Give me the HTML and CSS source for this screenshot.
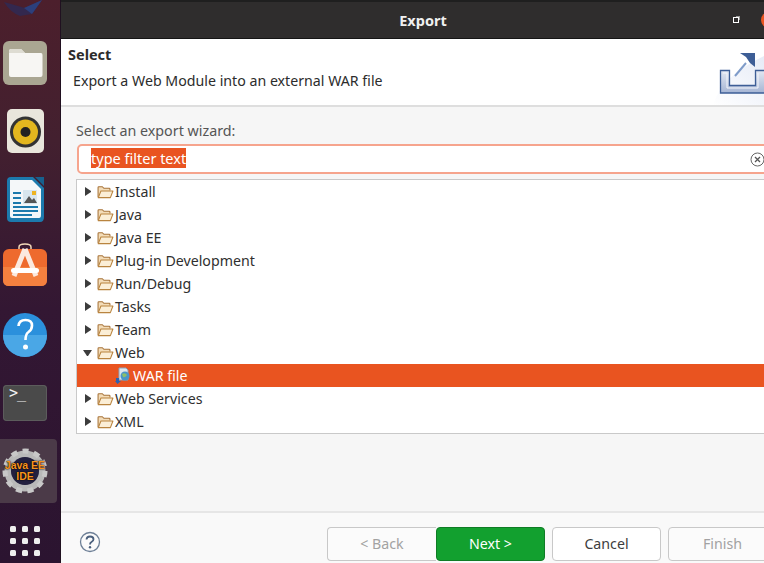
FILE: index.html
```html
<!DOCTYPE html>
<html lang="en">
<head>
<meta charset="utf-8">
<title>Export</title>
<link rel="stylesheet" href="styles.css">
</head>
<body>
<svg class="defs" width="0" height="0" aria-hidden="true">
  <defs>
    <symbol id="folder" viewBox="0 0 16 13">
      <path d="M1 11.500V2.200Q1 1.500 1.700 1.500H5L6.500 3H11.500Q12.200 3 12.200 3.700V5" fill="#f3dcb8" stroke="#a8743a" stroke-width="1"/>
      <path d="M1.200 11.800L3.700 5.500H15L12.600 11.800Z" fill="#fbeed6" stroke="#b9843f" stroke-width="1" stroke-linejoin="round"/>
    </symbol>
  </defs>
</svg>
<div class="screen">
  <nav class="dock">
    <svg class="dock-top" width="50" height="16" viewBox="0 0 50 16"><path d="M4 2L25 8L42 0L32 14L20 16Q10 12 4 2Z" fill="#33284e"/><path d="M32 14L42 0L24 8Z" fill="#2c3f7c"/></svg>
    <div class="dock-item item-files">
      <svg width="44" height="44" viewBox="0 0 44 44"><rect x="0" y="0" width="44" height="44" rx="6" fill="#aaa692"/><path d="M6 10Q6 8 8 8H18L22 12H38Q39.500 12 39.500 14V34Q39.500 36 37.500 36H8Q6 36 6 34Z" fill="#f7f6f3"/><path d="M6 12Q6 8 8 8H18L22 12Z" fill="#dedcd2"/></svg>
    </div>
    <div class="dock-item item-sound">
      <svg width="37" height="44" viewBox="0 0 37 44"><rect width="37" height="44" rx="5" fill="#e9e6dc"/><circle cx="18.500" cy="23" r="15.500" fill="#333"/><circle cx="18.500" cy="23" r="12.500" fill="#e3b71f"/><circle cx="18.500" cy="23" r="5" fill="#222"/></svg>
    </div>
    <div class="dock-item item-writer">
      <svg width="37" height="45" viewBox="0 0 37 45"><path d="M4 0H26L37 11V40Q37 45 33 45H4Q0 45 0 41V4Q0 0 4 0Z" fill="#1c7aad"/><path d="M3 3H25L34 12V38Q34 41 32 41H5Q3 41 3 39Z" fill="#f4f7f9"/><path d="M28 0L37 0V9Z" fill="#17618e"/><rect x="6" y="15" width="8" height="2" fill="#1c7aad"/><rect x="6" y="20" width="8" height="2" fill="#1c7aad"/><rect x="6" y="25" width="8" height="2" fill="#1c7aad"/><rect x="16" y="13" width="14" height="14" fill="#d8e6ee"/><path d="M17 26L22 19L25 23L27 21L30 26Z" fill="#555"/><rect x="25" y="14" width="4" height="4" fill="#eeb422"/><rect x="6" y="29" width="25" height="2" fill="#1c7aad"/><rect x="6" y="33" width="25" height="2" fill="#1c7aad"/><rect x="6" y="37" width="19" height="2" fill="#1c7aad"/></svg>
    </div>
    <div class="dock-item item-store">
      <svg width="44" height="43" viewBox="0 0 44 43"><path d="M16 8V4Q16 1 22 1Q28 1 28 4V8" fill="none" stroke="#f1d8b8" stroke-width="1.500"/><rect x="0" y="6" width="44" height="37" rx="6" fill="#ee6a2e"/><path d="M0 24H44V37Q44 43 38 43H6Q0 43 0 37Z" fill="#f4803f"/><path d="M22 6L11 33M22 6L33 33" stroke="#fbe9df" stroke-width="5" fill="none"/><rect x="8" y="25" width="28" height="5" rx="2.500" fill="#fff"/></svg>
    </div>
    <div class="dock-item item-help">
      <svg width="44" height="44" viewBox="0 0 44 44"><circle cx="22" cy="22" r="22" fill="#2b90dc"/><path d="M0 22A22 22 0 0 0 44 22Z" fill="#4aa7e6"/><path d="M15.500 13Q16 7 22.500 7Q29 7 29 12.500Q29 16.500 25.500 19Q22.500 21 22.500 27" fill="none" stroke="#fff" stroke-width="2.600"/><circle cx="22.500" cy="34" r="2.500" fill="#fff"/></svg>
    </div>
    <div class="dock-item item-term">
      <div class="term"><span class="term-prompt">&gt;_</span></div>
    </div>
    <div class="dock-active">
      <div class="gear">
        <svg width="46" height="46" viewBox="0 0 46 46"><circle cx="23" cy="23" r="17" fill="none" stroke="#b9b9b9" stroke-width="7"/><circle cx="23" cy="23" r="20" fill="none" stroke="#c8c8c8" stroke-width="5" stroke-dasharray="6 5.400"/><circle cx="23" cy="23" r="14" fill="#23203f"/></svg>
        <span class="gear-label">Java EE<br>IDE</span>
      </div>
    </div>
    <div class="apps">
      <i></i><i></i><i></i><i></i><i></i><i></i><i></i><i></i><i></i>
    </div>
  </nav>

  <main class="window">
    <header class="titlebar">
      <span class="title">Export</span>
      <span class="restore"></span>
      <span class="close"></span>
    </header>
    <section class="banner">
      <div class="banner-text">
        <h1>Select</h1>
        <p>Export a Web Module into an external WAR file</p>
      </div>
      <svg class="banner-icon" width="72" height="59" viewBox="0 0 72 59">
        <defs>
          <linearGradient id="bg" x1="0" y1="1" x2="1" y2="0"><stop offset="0" stop-color="#fff"/><stop offset="1" stop-color="#dfe6f4"/></linearGradient>
          <linearGradient id="tray" x1="0" y1="0" x2="0" y2="1"><stop offset="0" stop-color="#e3e8f2"/><stop offset="1" stop-color="#a5b5d4"/></linearGradient>
        </defs>
        <path d="M0 60Q8 25 72 1V60Z" fill="url(#bg)"/>
        <path d="M7.500 24.500H16.500V39.500H42.500V24.500H72V47H7.500Z" fill="url(#tray)" stroke="#3d5e96" stroke-width="1.300"/>
        <path d="M10 27H14V42H45V27" fill="none" stroke="#f4f6fb" stroke-width="1"/>
        <path d="M22 30L33 17" stroke="#7f9cc9" stroke-width="2"/>
        <path d="M27 7H42V21L37 17L33 11Z" fill="#3d5e96"/>
      </svg>
    </section>
    <section class="body">
      <label class="filter-label">Select an export wizard:</label>
      <div class="filter">
        <span class="filter-text">type filter text</span>
        <svg class="clear" width="15" height="15" viewBox="0 0 15 15"><circle cx="7.500" cy="7.500" r="6.500" fill="none" stroke="#666" stroke-width="1"/><path d="M5 5L10 10M10 5L5 10" stroke="#555" stroke-width="1.300"/></svg>
      </div>
      <ul class="tree">
        <li class="row"><span class="tw closed"></span><svg class="fo"><use href="#folder"/></svg><span class="rt">Install</span></li>
        <li class="row"><span class="tw closed"></span><svg class="fo"><use href="#folder"/></svg><span class="rt">Java</span></li>
        <li class="row"><span class="tw closed"></span><svg class="fo"><use href="#folder"/></svg><span class="rt">Java EE</span></li>
        <li class="row"><span class="tw closed"></span><svg class="fo"><use href="#folder"/></svg><span class="rt">Plug-in Development</span></li>
        <li class="row"><span class="tw closed"></span><svg class="fo"><use href="#folder"/></svg><span class="rt">Run/Debug</span></li>
        <li class="row"><span class="tw closed"></span><svg class="fo"><use href="#folder"/></svg><span class="rt">Tasks</span></li>
        <li class="row"><span class="tw closed"></span><svg class="fo"><use href="#folder"/></svg><span class="rt">Team</span></li>
        <li class="row"><span class="tw open"></span><svg class="fo"><use href="#folder"/></svg><span class="rt">Web</span></li>
        <li class="row selected">
          <svg class="war" width="17" height="17" viewBox="0 0 17 17"><path d="M4 1H11L13 3V13H4Z" fill="#dfe6ee" stroke="#8aa0b8" stroke-width="1"/><circle cx="10" cy="9" r="4.500" fill="#4b95c9"/><path d="M7 7Q10 5 12 8Q10 11 8 10Z" fill="#8cc06a"/><path d="M1 11H4V14H6L2.500 17L0 14H1Z" fill="#2c62b0"/></svg>
          <span class="rt">WAR file</span>
        </li>
        <li class="row"><span class="tw closed"></span><svg class="fo"><use href="#folder"/></svg><span class="rt">Web Services</span></li>
        <li class="row"><span class="tw closed"></span><svg class="fo"><use href="#folder"/></svg><span class="rt">XML</span></li>
      </ul>
    </section>
    <footer class="footer">
      <svg class="help" width="22" height="22" viewBox="0 0 22 22"><circle cx="11" cy="11" r="9.500" fill="#fbfbfb" stroke="#6d7f96" stroke-width="1.300"/><path d="M7.500 8.500Q7.700 5.500 11 5.500Q14.500 5.500 14.500 8.300Q14.500 10 12.500 11Q11 11.800 11 13.500" fill="none" stroke="#4a5f7c" stroke-width="1.800"/><circle cx="11" cy="16.300" r="1.200" fill="#4a5f7c"/></svg>
      <div class="buttons">
        <div class="pair">
          <button class="btn disabled">&lt; Back</button>
          <button class="btn primary">Next &gt;</button>
        </div>
        <button class="btn">Cancel</button>
        <button class="btn disabled">Finish</button>
      </div>
    </footer>
  </main>
</div>
</body>
</html>
```

FILE: styles.css
```css
* { box-sizing: border-box; }
html, body { margin: 0; padding: 0; height: 100%; overflow: hidden; }
body { font-family: "Noto Sans", "Open Sans", sans-serif; font-size: 14.200px; color: #3d3d3d; background: #f6f6f6; }
.defs { position: absolute; }
.screen { display: flex; width: 764px; height: 563px; overflow: hidden; }

.dock { flex: none; width: 61px; height: 563px; display: flex; flex-direction: column; align-items: flex-start; background: linear-gradient(180deg, #4c1f2c 0%, #43202f 25%, #331733 55%, #2b1430 100%); border-right: 1px solid #201020; overflow: hidden; }
.dock-top { flex: none; }
.dock-item { flex: none; display: flex; justify-content: center; width: 50px; }
.item-files { margin-top: 25px; }
.item-sound { margin-top: 24px; }
.item-writer { margin-top: 24px; }
.item-store { margin-top: 21px; }
.item-help { margin-top: 27px; }
.item-term { margin-top: 28px; }
.term { width: 44px; height: 36px; border-radius: 4px; background: #4a4a4a; box-shadow: inset 0 0 0 1px #5c5c5c; padding: 0 0 0 6px; }
.term-prompt { display: block; color: #f2f2f2; font: 15px/17px "DejaVu Sans Mono", monospace; letter-spacing: -1px; }
.dock-active { flex: none; width: 57px; height: 64px; margin-top: 18px; padding-left: 2px; background: #4b3a48; border-radius: 0 4px 4px 0; display: flex; align-items: center; }
.gear { position: relative; width: 46px; height: 46px; }
.gear svg { display: block; }
.gear-label { position: absolute; inset: 0; display: flex; flex-direction: column; align-items: center; justify-content: center; text-align: center; color: #f7941e; font: 700 10.500px/11px "Liberation Sans", sans-serif; text-shadow: 0 0 2px #000, 0 0 1px #000; white-space: nowrap; }
.apps { flex: none; display: grid; grid-template-columns: repeat(3, 6px); grid-auto-rows: 6px; gap: 6px; margin: 23px 0 0 10px; }
.apps i { background: #eee; border-radius: 1.500px; }

.window { flex: none; width: 724px; display: flex; flex-direction: column; height: 563px; background: #f6f6f6; }
.titlebar { flex: none; height: 39px; display: flex; align-items: center; justify-content: center; position: relative; background: #2f2d2d; border-top: 2px solid #1f1f1f; border-bottom: 1px solid #151515; }
.title { color: #f0f0f0; font-weight: 700; font-size: 14.500px; }
.restore { position: absolute; left: 672px; top: 15px; width: 6px; height: 6px; border: 1px solid #fff; box-shadow: 2px -2px 0 -1px #999; }
.close { position: absolute; right: 8px; top: 10px; width: 16px; height: 16px; border-radius: 50%; background: #e95420; }

.banner { flex: none; height: 68px; display: flex; justify-content: space-between; background: #fff; border-bottom: 2px solid #dedede; }
.banner-text { padding: 5px 0 0 7px; }
.banner h1 { margin: 0; font-size: 14.500px; font-weight: 700; line-height: 20px; color: #2c2c2c; }
.banner p { margin: 7px 0 0 5px; line-height: 20px; color: #2c2c2c; }
.banner-icon { flex: none; margin-top: 7px; }

.body { flex: 1; display: flex; flex-direction: column; padding: 14px 8px 0 15px; border-bottom: 2px solid #e6e6e6; }
.filter-label { display: block; line-height: 19px; color: #555; font-size: 14.300px; }
.filter { height: 30px; margin: 4px 0 0 1px; background: #fff; border: 2px solid #f6a48d; border-radius: 5px; display: flex; align-items: center; justify-content: space-between; padding: 0 10px 2px 12px; }
.filter-text { background: #e95420; color: #fff; line-height: 20px; font-size: 14.500px; }
.clear { flex: none; margin-top: 2px; }
.tree { list-style: none; margin: 5px 0 0 0; padding: 0; background: #fff; border: 1px solid #c9c9c9; height: 255px; }
.row { display: flex; align-items: center; height: 23px; color: #2f2f2f; padding-left: 7px; }
.rt { padding-bottom: 1px; }
.tw { flex: none; }
.closed { width: 6px; height: 9px; border-left: 6px solid #3c3c3c; border-top: 4.500px solid transparent; border-bottom: 4.500px solid transparent; margin: 0 6px 0 1px; }
.open { width: 9px; height: 6px; border-top: 6px solid #3c3c3c; border-left: 4.500px solid transparent; border-right: 4.500px solid transparent; margin: 0 5px 0 -1px; }
.fo { flex: none; width: 17px; height: 14px; margin-right: 1px; }
.selected { background: #e95420; color: #fff; padding-left: 38px; }
.war { flex: none; margin-right: 1px; }

.footer { flex: none; height: 50px; display: flex; align-items: flex-start; padding: 14px 8px 0 18px; background: #f9f9f9; }
.help { flex: none; margin-top: 4px; }
.buttons { margin-left: auto; display: flex; gap: 7px; }
.pair { display: flex; }
.btn { width: 109px; height: 34px; padding: 0 0 2px; font: inherit; border: 1px solid #c8c8c8; border-radius: 4px; background: #fff; color: #3d3d3d; }
.pair .btn:first-child { border-radius: 4px 0 0 4px; border-right: 0; }
.disabled { color: #a2a2a2; background: #fbfbfb; }
.primary { background: #12a02f; border-color: #0f7c25; color: #fff; border-radius: 4px; }
```
